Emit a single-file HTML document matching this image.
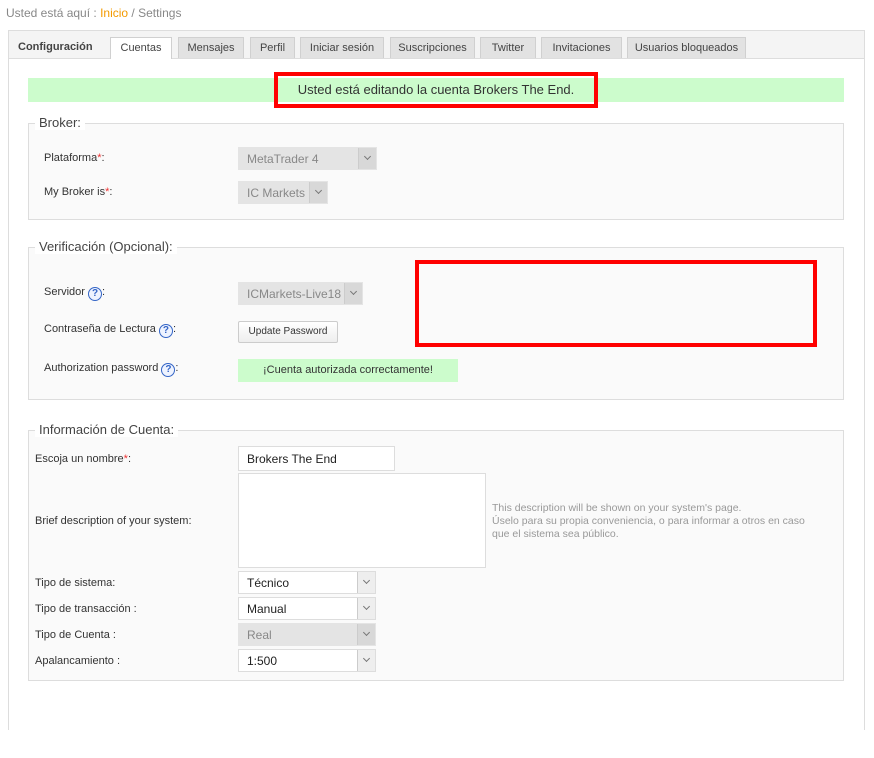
<!DOCTYPE html>
<html><head><meta charset="utf-8"><style>
*{box-sizing:border-box}
body{margin:0;width:874px;height:695px;overflow:hidden;background:#fff;font-family:"Liberation Sans","DejaVu Sans",sans-serif;font-size:11px;color:#333;position:relative}
.a{position:absolute;white-space:nowrap}
.bc{left:6px;top:6px;font-size:12px;color:#888}
.bc b{font-weight:normal;color:#f39a00}
.panel{position:absolute;left:8px;top:30px;width:857px;height:700px;border:1px solid #ddd;background:#f4f4f4}
.content{position:absolute;left:9px;top:58px;width:855px;height:700px;background:#fff;border-top:1px solid #ddd}
.tab{position:absolute;top:37px;height:21px;background:#e2e2e2;border:1px solid #d0d0d0;border-bottom:none;font-size:11px;color:#444;text-align:center;line-height:20px}
.fs{position:absolute;left:28px;width:816px;border:1px solid #ddd;background:#fafafa}
.lg{position:absolute;background:#fff;padding:0 4px;font-size:13px;color:#444}
.sel{position:absolute;height:23px;border:1px solid #ddd;background:#fff;font-size:12px;color:#222;padding:4px 8px;overflow:hidden}
.sel.dis{background:#e4e4e4;color:#888;border-color:#e4e4e4}
.sel i{position:absolute;right:0;top:0;width:18px;height:21px;border-left:1px solid #ccc;background:#eee}
.sel.dis i{background:#d8d8d8}
.sel i:after{content:"";position:absolute;left:6px;top:6px;width:4px;height:4px;border-right:1px solid #777;border-bottom:1px solid #777;transform:rotate(45deg)}
.q{display:inline-block;width:14px;height:14px;border-radius:50%;border:1px solid #3465c6;color:#3465c6;font-size:10px;font-weight:bold;text-align:center;line-height:12px;background:#eef3ff;vertical-align:-1px}
.r{color:#e33}
</style></head><body>
<div class="a bc">Usted está aquí : <b>Inicio</b> / Settings</div>
<div class="panel"></div>
<div class="content"></div>
<div class="a" style="left:18px;top:41px;font-weight:bold;color:#444">Configuración</div>
<div class="tab" style="left:110px;width:62px;background:#fff;height:22px">Cuentas</div>
<div class="tab" style="left:178px;width:66px">Mensajes</div>
<div class="tab" style="left:250px;width:45px">Perfil</div>
<div class="tab" style="left:300px;width:84px">Iniciar sesión</div>
<div class="tab" style="left:390px;width:85px">Suscripciones</div>
<div class="tab" style="left:480px;width:56px">Twitter</div>
<div class="tab" style="left:541px;width:81px">Invitaciones</div>
<div class="tab" style="left:627px;width:119px">Usuarios bloqueados</div>

<div class="a" style="left:28px;top:78px;width:816px;height:24px;background:#ccfccc"></div>
<div class="a" style="left:274px;top:72px;width:324px;height:36px;border:4px solid #f00;font-size:13px;color:#333;text-align:center;line-height:28px">Usted está editando la cuenta Brokers The End.</div>

<div class="fs" style="top:123px;height:97px"></div>
<div class="lg" style="left:35px;top:115px">Broker:</div>
<div class="a" style="left:44px;top:152px">Plataforma<span class="r">*</span>:</div>
<div class="sel dis" style="left:238px;top:147px;width:139px">MetaTrader 4<i></i></div>
<div class="a" style="left:44px;top:186px">My Broker is<span class="r">*</span>:</div>
<div class="sel dis" style="left:238px;top:181px;width:90px">IC Markets<i></i></div>

<div class="fs" style="top:247px;height:153px"></div>
<div class="lg" style="left:35px;top:239px">Verificación (Opcional):</div>
<div class="a" style="left:44px;top:286px">Servidor <span class="q">?</span>:</div>
<div class="sel dis" style="left:238px;top:282px;width:125px">ICMarkets-Live18<i></i></div>
<div class="a" style="left:44px;top:323px">Contraseña de Lectura <span class="q">?</span>:</div>
<div class="a" style="left:238px;top:321px;width:100px;height:22px;border:1px solid #ccc;border-radius:2px;background:linear-gradient(#fff,#eee);font-size:10px;text-align:center;line-height:20px">Update Password</div>
<div class="a" style="left:44px;top:362px">Authorization password <span class="q">?</span>:</div>
<div class="a" style="left:238px;top:359px;width:220px;height:23px;background:#ccfccc;font-size:11px;text-align:center;line-height:23px">¡Cuenta autorizada correctamente!</div>
<div class="a" style="left:415px;top:260px;width:402px;height:87px;border:4px solid #f00"></div>

<div class="fs" style="top:430px;height:251px"></div>
<div class="lg" style="left:35px;top:422px">Información de Cuenta:</div>
<div class="a" style="left:35px;top:453px;font-size:11px">Escoja un nombre<span class="r">*</span>:</div>
<div class="sel" style="left:238px;top:446px;width:157px;height:25px;padding-top:5px">Brokers The End</div>
<div class="a" style="left:35px;top:515px;font-size:11px">Brief description of your system:</div>
<div class="a" style="left:238px;top:473px;width:248px;height:95px;border:1px solid #ddd;background:#fff"></div>
<div class="a" style="left:492px;top:502px;font-size:10.5px;color:#999;line-height:13px">This description will be shown on your system's page.<br>Úselo para su propia conveniencia, o para informar a otros en caso<br>que el sistema sea público.</div>
<div class="a" style="left:35px;top:577px;font-size:11px">Tipo de sistema:</div>
<div class="sel" style="left:238px;top:571px;width:138px">Técnico<i></i></div>
<div class="a" style="left:35px;top:603px;font-size:11px">Tipo de transacción :</div>
<div class="sel" style="left:238px;top:597px;width:138px">Manual<i></i></div>
<div class="a" style="left:35px;top:629px;font-size:11px">Tipo de Cuenta :</div>
<div class="sel dis" style="left:238px;top:623px;width:138px">Real<i></i></div>
<div class="a" style="left:35px;top:655px;font-size:11px">Apalancamiento :</div>
<div class="sel" style="left:238px;top:649px;width:138px">1:500<i></i></div>
</body></html>
